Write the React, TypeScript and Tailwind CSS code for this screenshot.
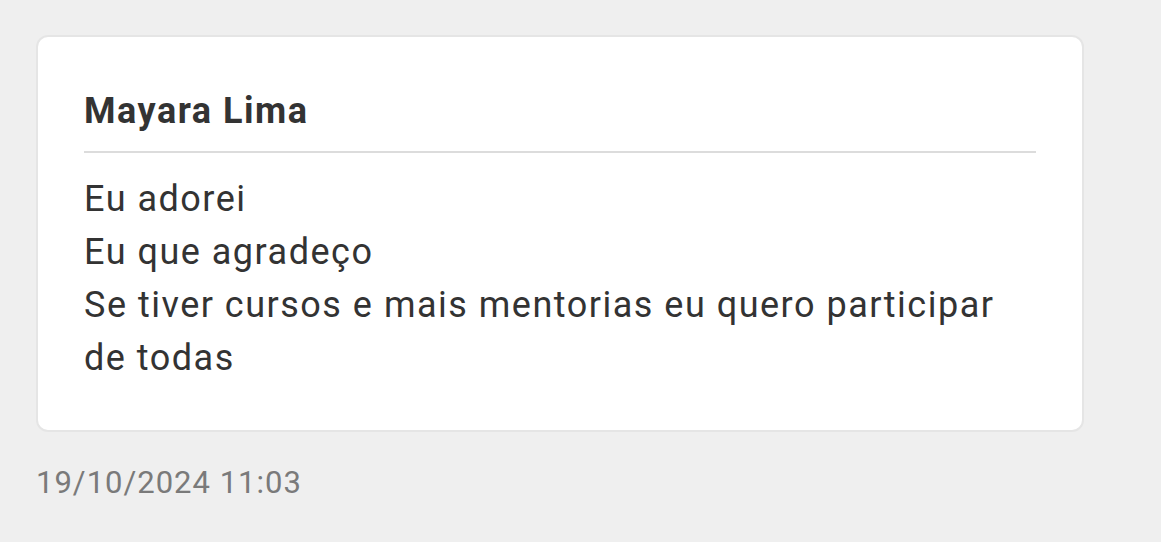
const lines = ['Eu adorei', 'Eu que agradeço', 'Se tiver cursos e mais mentorias eu quero participar de todas'];

const App = () => {
  return (
    <main className="min-h-screen bg-[#efefef] px-[36px] pt-[35px] font-['Roboto',sans-serif]">
      <div className="w-[1048px] rounded-[12px] border-2 border-[#e5e5e5] bg-white px-[46px] pb-[45px] pt-[54px]">
        <h2 className="border-b-2 border-[#dcdcdc] pb-[20px] text-[36px] font-bold leading-[40px] tracking-[1.5px] text-[#333333]">
          Mayara Lima
        </h2>
        <div className="mt-[20px] text-[36px] leading-[53px] tracking-[1.5px] text-[#333333]">
          {lines.map((line) => (
            <p key={line}>{line}</p>
          ))}
        </div>
      </div>
      <p className="mt-[33px] text-[31px] leading-[36px] tracking-[1px] text-[#7a7a7a]">19/10/2024 11:03</p>
    </main>
  );
};

export default App;
